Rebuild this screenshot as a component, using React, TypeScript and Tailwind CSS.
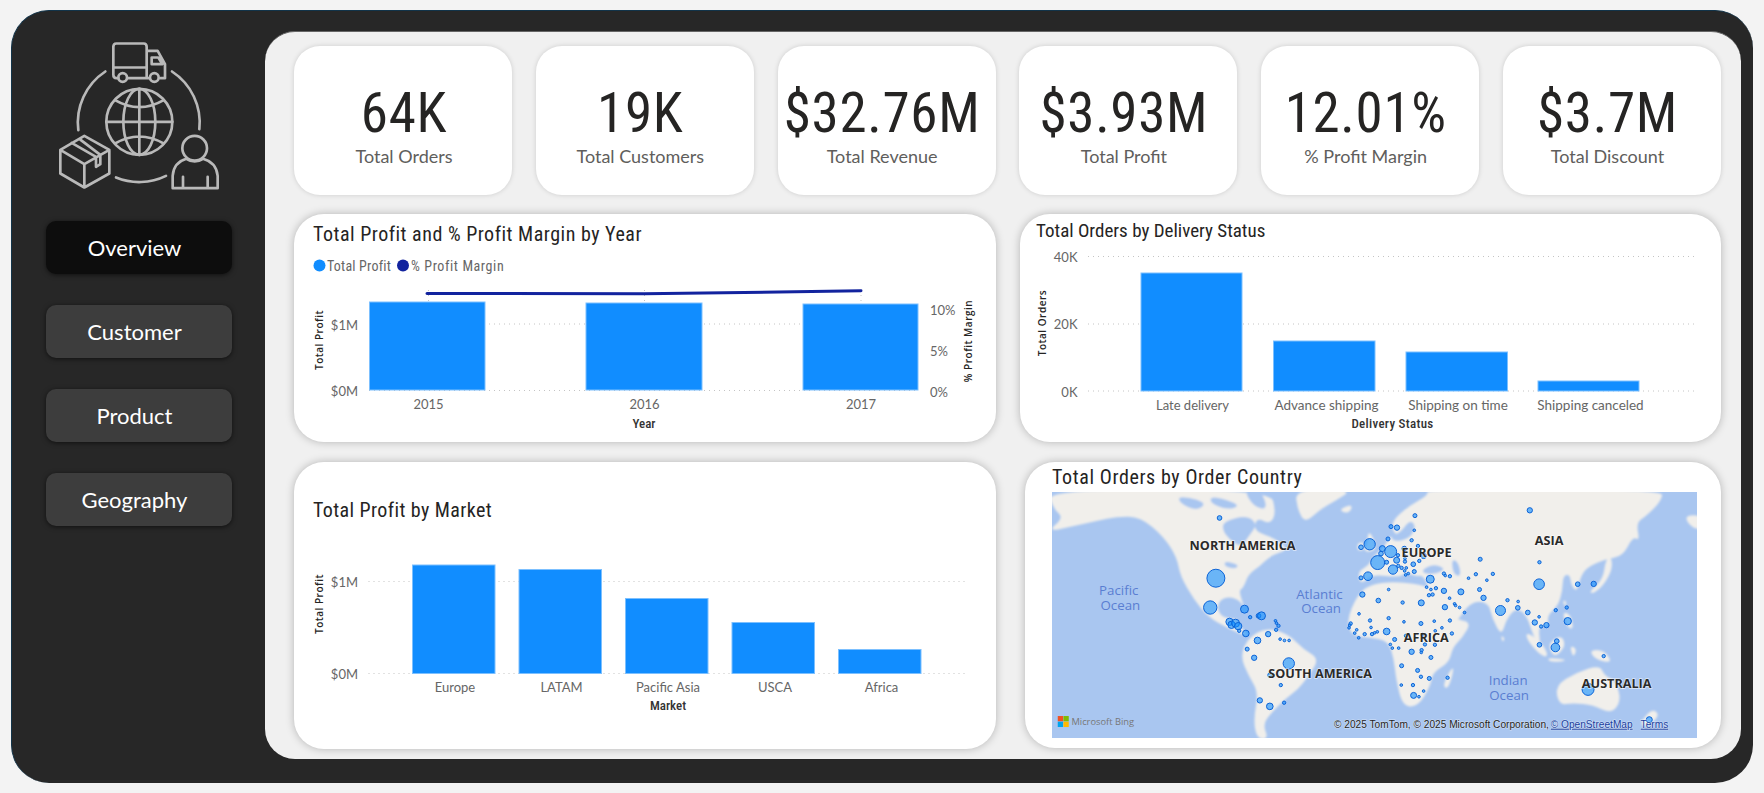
const din = "font-['Roboto',sans-serif] [font-stretch:75%]";
const lato = "font-['Lato',sans-serif]";
const open = "font-['Open_Sans',sans-serif]";

const kpis = [
  { value: "64K", label: "Total Orders" },
  { value: "19K", label: "Total Customers" },
  { value: "$32.76M", label: "Total Revenue" },
  { value: "$3.93M", label: "Total Profit" },
  { value: "12.01%", label: "% Profit Margin" },
  { value: "$3.7M", label: "Total Discount" },
];

const navItems = ["Overview", "Customer", "Product", "Geography"];

// bubbles left of the map, in 3x crop units: x, y, r
const westBubbles = [
  [538, 176, 7], [527, 357, 27], [510, 445, 20], [613, 450, 12], [630, 474, 5], [655, 470, 7], [664, 470, 12],
  [568, 488, 11], [574, 497, 11], [586, 492, 12], [594, 501, 11], [597, 515, 5], [617, 523, 10], [706, 485, 4],
  [709, 492, 4], [715, 500, 5], [708, 512, 5], [684, 525, 8], [652, 544, 10], [720, 540, 4], [733, 544, 4],
  [747, 544, 4], [621, 570, 6], [642, 596, 8], [746, 613, 17], [690, 648, 7], [722, 678, 5], [659, 724, 8],
  [689, 742, 10], [732, 731, 5], [932, 493, 5], [929, 498, 4], [927, 506, 4], [950, 512, 4], [944, 522, 4],
  [957, 464, 4], [956, 536, 4],
];

// the rest of the bubbles, x measured from 960
const eastBubbles = [
  [165, 169, 6], [93, 202, 6], [111, 205, 8], [163, 213, 4], [84, 239, 6], [155, 243, 5], [174, 260, 5], [29, 255, 17],
  [3, 264, 7], [67, 268, 9], [92, 277, 18], [133, 268, 7], [63, 283, 7], [114, 288, 5], [110, 303, 9], [134, 290, 4],
  [135, 298, 4], [135, 307, 5], [53, 310, 21], [80, 309, 6], [160, 315, 7], [178, 305, 5], [191, 290, 8], [115, 320, 5],
  [125, 326, 5], [139, 326, 4], [99, 331, 14], [134, 335, 4], [137, 347, 4], [145, 343, 4], [163, 337, 6], [24, 351, 13],
  [3, 356, 6], [252, 343, 5], [256, 349, 4], [270, 351, 5], [211, 360, 12], [361, 300, 6], [326, 357, 4], [348, 345, 5],
  [399, 344, 5], [381, 363, 4], [539, 309, 5], [510, 153, 8], [538, 375, 16], [654, 375, 7], [702, 374, 8], [7, 406, 8],
  [86, 391, 4], [55, 424, 7], [128, 430, 5], [184, 431, 9], [200, 384, 4], [213, 391, 4], [228, 387, 5], [252, 395, 8],
  [303, 398, 9], [359, 391, 6], [371, 416, 8], [269, 417, 4], [207, 408, 5], [218, 406, 5], [284, 434, 4], [287, 439, 4],
  [299, 445, 4], [255, 444, 8], [314, 460, 4], [443, 423, 5], [475, 427, 4], [422, 454, 15], [474, 446, 7], [504, 460, 7],
  [588, 453, 5], [621, 445, 5], [538, 473, 4], [525, 490, 8], [544, 502, 5], [560, 498, 8], [624, 486, 11], [30, 484, 5],
  [33, 505, 4], [86, 477, 5], [132, 488, 4], [183, 493, 6], [223, 486, 4], [270, 484, 5], [14, 525, 5], [36, 525, 5],
  [44, 521, 4], [52, 518, 4], [80, 517, 10], [104, 541, 6], [138, 530, 5], [188, 527, 5], [226, 515, 4], [246, 506, 4],
  [276, 523, 5], [91, 556, 4], [97, 567, 4], [116, 567, 4], [155, 578, 8], [195, 556, 5], [225, 557, 5], [185, 573, 5],
  [184, 580, 4], [213, 595, 6], [125, 620, 6], [173, 634, 6], [183, 653, 5], [208, 658, 6], [263, 656, 5], [124, 678, 4],
  [159, 678, 5], [191, 696, 4], [161, 709, 9], [177, 713, 4], [539, 557, 7], [591, 546, 7], [587, 565, 13], [732, 591, 5],
  [685, 691, 18], [869, 782, 9],
];

const land = [
  // north america
  "20 218 70 175 40 150 20 90 690 90 708 160 690 195 650 175 640 215 700 235 748 270 690 290 660 320 625 345 610 385 595 395 615 450 595 420 555 412 530 435 540 470 575 480 590 478 600 505 630 532 600 525 560 505 505 475 460 420 420 350 410 295 370 232 300 173 230 172 170 185 100 200",
  // greenland, iceland
  "765 90 940 90 885 125 840 150 795 192 772 150",
  "898 155 915 140 938 138 928 162",
  // south america
  "625 535 680 505 745 525 790 570 838 600 805 650 775 690 735 720 695 760 668 795 685 840 650 840 640 780 655 700 625 650 600 590",
  // africa
  "920 485 950 410 990 375 1060 367 1140 375 1195 395 1215 420 1240 480 1295 488 1268 535 1238 565 1228 610 1178 640 1172 680 1135 742 1088 742 1068 660 1062 600 1045 545 990 535 935 530",
  // eurasia
  "958 368 955 335 985 320 1000 290 1035 262 1052 225 1060 248 1110 238 1128 200 1110 182 1085 215 1065 228 1052 190 1105 140 1165 108 1160 90 1870 90 1865 125 1820 170 1790 190 1800 245 1780 232 1750 290 1700 300 1650 320 1625 345 1612 398 1595 380 1590 345 1570 350 1568 395 1555 440 1522 470 1528 503 1495 498 1503 565 1480 530 1462 470 1430 445 1400 480 1385 530 1358 480 1345 428 1290 428 1240 505 1195 440 1168 392 1150 348 1128 352 1100 340 1075 355 1000 345 975 368",
  // uk, ireland, far east corner
  "985 213 1005 245 1007 274 970 279 982 250",
  "953 250 974 250 972 274 951 274",
  "1935 168 1990 168 1990 215 1950 200",
  // japan, philippines
  "1648 398 1690 360 1698 300 1715 292 1718 330 1692 378 1660 404",
  "1568 458 1592 465 1602 512 1580 502",
  "1568 425 1580 425 1578 445",
  // sumatra, java, borneo, sulawesi, new guinea
  "1458 518 1502 545 1528 592 1505 592 1463 545",
  "1522 594 1592 604 1530 610",
  "1528 550 1565 528 1578 560 1550 592 1533 580",
  "1590 558 1612 570 1600 597",
  "1648 573 1692 572 1720 612 1668 602",
  // australia, new zealand, madagascar, sri lanka
  "1546 680 1610 640 1680 618 1695 650 1728 665 1745 725 1715 765 1660 738 1600 732 1558 738",
  "1838 748 1862 770 1818 805 1800 792",
  "1228 638 1244 622 1226 690 1208 682",
  "1383 528 1396 538 1388 550",
];

const water = [
  // hudson bay, arctic channels, great lakes
  "552 185 620 168 652 195 628 228 602 265 565 238 546 210",
  "415 108 500 128 472 155 418 132",
  "515 108 605 138 560 152 508 130",
  "610 90 662 90 684 152 640 142",
  "555 305 598 318 582 330 552 320",
  // black sea, caspian
  "1145 332 1180 314 1218 328 1190 344 1155 344",
  "1235 298 1256 310 1264 352 1240 346",
];

// rounds the corners of a traced outline with quadratic curves
const smooth = (outline: string) => {
  const n = outline.split(" ").map(Number);
  const pts: number[][] = [];
  for (let i = 0; i < n.length; i += 2) pts.push([n[i], n[i + 1]]);
  const mid = (a: number[], b: number[]) => `${(a[0] + b[0]) / 2} ${(a[1] + b[1]) / 2}`;
  let d = `M${mid(pts[pts.length - 1], pts[0])}`;
  pts.forEach((p, i) => {
    d += ` Q${p[0]} ${p[1]} ${mid(p, pts[(i + 1) % pts.length])}`;
  });
  return d + " Z";
};

const Bar = ({ x, top, right, bottom }: { x: number; top: number; right: number; bottom: number }) => (
  <rect x={x} y={top} width={right - x} height={bottom - top} fill="#118DFF" stroke="#7cc0ff" strokeWidth="1" />
);

const Grid = ({ y, x1, x2 }: { y: number; x1: number; x2: number }) => (
  <line x1={x1} x2={x2} y1={y} y2={y} stroke="#c4c4c4" strokeWidth="1" strokeDasharray="1 4" />
);

const Tick = ({ x, y, children, anchor = "middle", size = 13 }: { x: number; y: number; children: string; anchor?: "start" | "middle" | "end"; size?: number }) => (
  <text x={x} y={y} textAnchor={anchor} dominantBaseline="central" fontSize={size} fill="#666666" className={lato}>
    {children}
  </text>
);

const AxisTitle = ({ x, y, children, spacing = 0 }: { x: number; y: number; children: string; spacing?: number }) => (
  <text x={x} y={y} textAnchor="middle" dominantBaseline="central" fontSize="13" fontWeight="500" fill="#333333" letterSpacing={spacing} className={din}>
    {children}
  </text>
);

const SideTitle = ({ x, y, children }: { x: number; y: number; children: string }) => (
  <text
    x={x}
    y={y}
    transform={`rotate(-90 ${x} ${y})`}
    textAnchor="middle"
    dominantBaseline="central"
    fontSize="10"
    fontWeight="600"
    fill="#252423"
    letterSpacing="0.5"
    className={open}
  >
    {children}
  </text>
);

const Logo = () => (
  <svg viewBox="165 115 495 455" className="w-[165px] h-[152px]" fill="none" stroke="#b9b9b9" strokeWidth="8" strokeLinecap="round" strokeLinejoin="round">
    <path d="M352 232 H346 Q337 232 337 222 V138 Q337 128 346 128 H428 Q437 128 437 138 V232 H380 M437 150 H470 L492 190 V232 H478 M442 232 H446 M337 200 H437 M452 170 H472 L484 190 H452 Z" />
    <circle cx="365" cy="230" r="13" />
    <circle cx="460" cy="230" r="13" />
    <circle cx="415" cy="363" r="99" />
    <ellipse cx="415" cy="363" rx="48" ry="99" />
    <path d="M415 264 V462 M316 363 H514 M342 298 Q415 340 488 298 M342 428 Q415 386 488 428" />
    <path d="M313 212 A183 183 0 0 0 232 388 M513 212 A183 183 0 0 1 595 385 M345 530 A183 183 0 0 0 495 525" />
    <path d="M250 405 L325 447 V518 L250 560 L178 518 V447 Z M178 447 L250 490 L325 447 M250 490 V560 M212 426 L285 468 V498 L298 490 V462 L235 414" />
    <circle cx="581" cy="442" r="37" />
    <path d="M515 562 V525 Q518 485 556 474 Q581 490 606 474 Q646 485 650 525 V562 Z M546 528 V562 M620 528 V562" />
  </svg>
);

const WorldMap = () => (
  <svg viewBox="36 98 1935 739" className="w-[645px] h-[246px] block bg-[#a9c6f0]">
    <defs>
      <filter id="soft" x="-5%" y="-5%" width="110%" height="110%">
        <feGaussianBlur stdDeviation="2.5" />
      </filter>
    </defs>
    <g filter="url(#soft)">
      {land.map((outline, i) => (
        <path key={i} d={smooth(outline)} fill="#f1efeb" />
      ))}
      {water.map((outline, i) => (
        <path key={i} d={smooth(outline)} fill="#a9c6f0" />
      ))}
    </g>
    <g fill="#5a7ed2" textAnchor="middle" fontSize="40" className={open}>
      <text x="235" y="408">Pacific</text>
      <text x="240" y="452">Ocean</text>
      <text x="838" y="418">Atlantic</text>
      <text x="843" y="462">Ocean</text>
      <text x="1405" y="678">Indian</text>
      <text x="1408" y="722">Ocean</text>
    </g>
    {westBubbles.map(([x, y, r], i) => (
      <circle key={i} cx={x} cy={y} r={r} fill="#118DFF" fillOpacity="0.6" stroke="#0b62d6" strokeWidth="3" />
    ))}
    {eastBubbles.map(([x, y, r], i) => (
      <circle key={i} cx={x + 960} cy={y} r={r} fill="#118DFF" fillOpacity="0.6" stroke="#0b62d6" strokeWidth="3" />
    ))}
    <g fill="#2a2a2a" fontWeight="700" fontSize="38" textAnchor="middle" stroke="#ffffff" strokeOpacity="0.6" strokeWidth="4" paintOrder="stroke" className={open}>
      <text x="607" y="272">NORTH AMERICA</text>
      <text x="1160" y="292">EUROPE</text>
      <text x="1528" y="258">ASIA</text>
      <text x="1159" y="549">AFRICA</text>
      <text x="840" y="657">SOUTH AMERICA</text>
      <text x="1731" y="687">AUSTRALIA</text>
    </g>
    <rect x="52" y="771" width="16" height="16" fill="#f25022" />
    <rect x="69" y="771" width="16" height="16" fill="#7fba00" />
    <rect x="52" y="788" width="16" height="16" fill="#00a4ef" />
    <rect x="69" y="788" width="16" height="16" fill="#ffb900" />
    <text x="93" y="798" fontSize="28" fill="#777777" className={open}>
      Microsoft Bing
    </text>
    <g fontSize="30.5" fill="#222222" stroke="#ffffff" strokeOpacity="0.5" strokeWidth="3" paintOrder="stroke" className="font-['Liberation_Sans',sans-serif]">
      <text x="882" y="806">© 2025 TomTom, © 2025 Microsoft Corporation,</text>
      <text x="1533" y="806" fill="#1a3d9c" textDecoration="underline">© OpenStreetMap</text>
      <text x="1803" y="806" fill="#1a3d9c" textDecoration="underline">Terms</text>
    </g>
  </svg>
);

export default function App() {
  return (
    <div className="w-[1764px] h-[793px] bg-[#f3f3f3] pt-[10px] pl-[11px] overflow-hidden">
      <div className="w-[1742px] h-[773px] rounded-[38px] bg-[#272727] border-l border-t border-[#12344a] flex">
        <aside className="w-[253px] shrink-0 flex flex-col items-center pt-[28px]">
          <Logo />
          <nav className="mt-[30px] flex flex-col gap-[31px]">
            {navItems.map((item, i) => (
              <button
                key={item}
                className={`w-[186px] h-[53px] pr-[8px] pb-[1px] rounded-[10px] text-white text-[22px] shadow-[0_1px_5px_rgba(0,0,0,0.6)] ${lato} ${i === 0 ? "bg-[#0d0d0d]" : "bg-[#3d3d3d]"}`}
              >
                {item}
              </button>
            ))}
          </nav>
        </aside>

        <main className="mt-[20px] w-[1476px] shrink-0 h-[728px] rounded-[30px] bg-[#f0f0f0] border-t border-[#666666] pt-[14px] pl-[29px]">
          <div className="flex gap-[23.8px]">
            {kpis.map((kpi, i) => (
              <div
                key={kpi.label}
                className={`w-[218px] h-[149px] shrink-0 rounded-[26px] bg-white shadow-[0_0_5px_rgba(0,0,0,0.15)] flex flex-col items-center pt-[37px] ${i === 0 ? "pl-[2px]" : "pr-[9px]"}`}
              >
                <div className={`h-[60px] leading-[60px] text-[55px] text-[#252423] tracking-[0.7px] ${din}`}>{kpi.value}</div>
                <div className={`mt-[1px] h-[24px] leading-[24px] text-[18px] text-[#605e5c] ${lato}`}>{kpi.label}</div>
              </div>
            ))}
          </div>

          <div className="mt-[19px] flex gap-[24px]">
            <section className="w-[702px] h-[228px] shrink-0 rounded-[30px] bg-white shadow-[0_0_8px_rgba(0,0,0,0.25)] flex flex-col">
              <h2 className={`pt-[8px] pl-[19px] h-[32px] leading-[24px] text-[20px] tracking-[0.5px] text-[#252423] ${din}`}>
                Total Profit and % Profit Margin by Year
              </h2>
              <svg viewBox="294 246 702 196" className="w-[702px] h-[196px]">
                <circle cx="319.5" cy="265.5" r="6" fill="#118DFF" />
                <text x="327" y="265.5" dominantBaseline="central" fontSize="14" fill="#666666" letterSpacing="0.2" className={din}>Total Profit</text>
                <circle cx="403" cy="265.5" r="6" fill="#12239E" />
                <text x="411" y="265.5" dominantBaseline="central" fontSize="14" fill="#666666" letterSpacing="0.6" className={din}>% Profit Margin</text>
                <Grid y={324} x1={369} x2={918} />
                <Grid y={390.5} x1={369} x2={918} />
                {[428.5, 644.5, 861].map((x) => (
                  <line key={x} x1={x} x2={x} y1={290} y2={302} stroke="#c4c4c4" strokeDasharray="1 4" />
                ))}
                <Bar x={369.5} top={302} right={485} bottom={390} />
                <Bar x={586} top={303} right={702} bottom={390} />
                <Bar x={803} top={304} right={918} bottom={390} />
                <path d="M427 293.5 L644 293.8 L861 290.8" fill="none" stroke="#12239E" strokeWidth="3" strokeLinecap="round" />
                <Tick x={358} y={325} anchor="end">$1M</Tick>
                <Tick x={358} y={391} anchor="end">$0M</Tick>
                <Tick x={930} y={310} anchor="start">10%</Tick>
                <Tick x={930} y={351} anchor="start">5%</Tick>
                <Tick x={930} y={392} anchor="start">0%</Tick>
                <Tick x={428.5} y={404}>2015</Tick>
                <Tick x={644.5} y={404}>2016</Tick>
                <Tick x={861} y={404}>2017</Tick>
                <AxisTitle x={644} y={423}>Year</AxisTitle>
                <SideTitle x={318.5} y={340}>Total Profit</SideTitle>
                <SideTitle x={968} y={341}>% Profit Margin</SideTitle>
              </svg>
            </section>

            <section className="w-[701px] h-[228px] shrink-0 rounded-[30px] bg-white shadow-[0_0_8px_rgba(0,0,0,0.25)] flex flex-col">
              <h2 className={`pt-[5px] pl-[16px] h-[29px] leading-[24px] text-[19px] text-[#252423] ${din}`}>
                Total Orders by Delivery Status
              </h2>
              <svg viewBox="1020 243 701 199" className="w-[701px] h-[199px]">
                <Grid y={256.5} x1={1088} x2={1697} />
                <Grid y={324} x1={1088} x2={1697} />
                <Grid y={391} x1={1088} x2={1697} />
                <Bar x={1141} top={273} right={1242} bottom={391} />
                <Bar x={1273.5} top={341} right={1375} bottom={391} />
                <Bar x={1406} top={352} right={1507.5} bottom={391} />
                <Bar x={1538} top={381} right={1639} bottom={391} />
                <Tick x={1077.5} y={256.5} anchor="end">40K</Tick>
                <Tick x={1077.5} y={324} anchor="end">20K</Tick>
                <Tick x={1077.5} y={391.5} anchor="end">0K</Tick>
                <Tick x={1192.5} y={405}>Late delivery</Tick>
                <Tick x={1326.5} y={405} size={13.5}>Advance shipping</Tick>
                <Tick x={1458} y={405} size={13.5}>Shipping on time</Tick>
                <Tick x={1590.5} y={405} size={13.5}>Shipping canceled</Tick>
                <AxisTitle x={1392.5} y={423} spacing={0.3}>Delivery Status</AxisTitle>
                <SideTitle x={1041.5} y={323}>Total Orders</SideTitle>
              </svg>
            </section>
          </div>

          <div className="mt-[20px] flex">
            <section className="w-[702px] h-[287px] shrink-0 rounded-[30px] bg-white shadow-[0_0_8px_rgba(0,0,0,0.25)] flex flex-col">
              <h2 className={`pt-[36px] pl-[19px] h-[72px] leading-[24px] text-[20px] tracking-[0.4px] text-[#252423] ${din}`}>
                Total Profit by Market
              </h2>
              <svg viewBox="294 534 702 215" className="w-[702px] h-[215px]">
                <Grid y={581.5} x1={368.5} x2={967.5} />
                <Grid y={673.5} x1={368.5} x2={967.5} />
                <Bar x={412.5} top={565} right={495} bottom={673.5} />
                <Bar x={519} top={569.5} right={601.5} bottom={673.5} />
                <Bar x={625.5} top={598.5} right={708} bottom={673.5} />
                <Bar x={732} top={622.5} right={814.5} bottom={673.5} />
                <Bar x={838.5} top={649.5} right={921} bottom={673.5} />
                <Tick x={358} y={581.5} anchor="end">$1M</Tick>
                <Tick x={358} y={673.5} anchor="end">$0M</Tick>
                <Tick x={455} y={686.5}>Europe</Tick>
                <Tick x={561.5} y={686.5}>LATAM</Tick>
                <Tick x={668} y={686.5}>Pacific Asia</Tick>
                <Tick x={775} y={686.5}>USCA</Tick>
                <Tick x={881.5} y={686.5}>Africa</Tick>
                <AxisTitle x={668} y={705}>Market</AxisTitle>
                <SideTitle x={318.5} y={604}>Total Profit</SideTitle>
              </svg>
            </section>

            <section className="ml-[29px] w-[696px] h-[286px] shrink-0 rounded-[30px] bg-white shadow-[0_0_8px_rgba(0,0,0,0.25)] pt-[3px] pl-[27px]">
              <h2 className={`h-[27px] leading-[24px] text-[20px] tracking-[0.6px] text-[#252423] ${din}`}>
                Total Orders by Order Country
              </h2>
              <WorldMap />
            </section>
          </div>
        </main>
      </div>
    </div>
  );
}
